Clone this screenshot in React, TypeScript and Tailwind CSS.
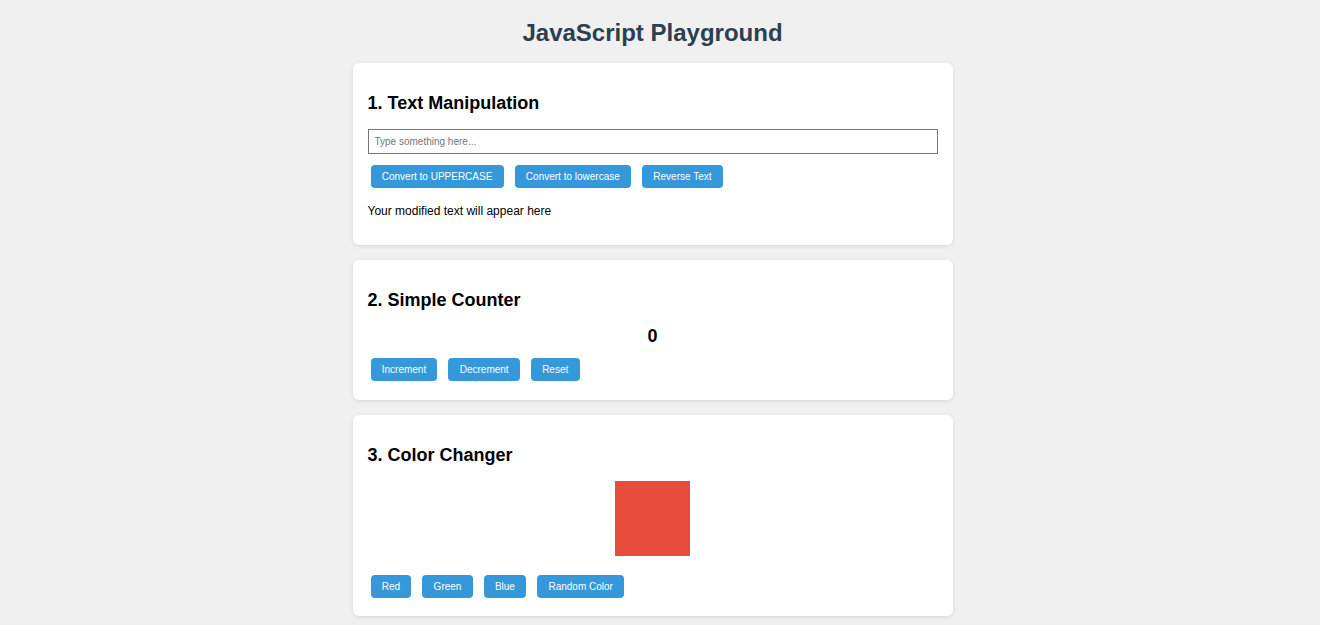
import { useState } from 'react';

const btn =
  'h-[23px] rounded-[4px] bg-[#3498db] px-[11.25px] text-[10px] leading-none text-white hover:bg-[#2980b9]';

export default function App() {
  const [text, setText] = useState('');
  const [output, setOutput] = useState('Your modified text will appear here');
  const [count, setCount] = useState(0);
  const [color, setColor] = useState('#e74c3c');

  const randomColor = () => {
    const hex = Math.floor(Math.random() * 0xffffff).toString(16).padStart(6, '0');
    setColor(`#${hex}`);
  };

  return (
    <div className="min-h-screen bg-[#f0f0f0] pt-[19px] pr-[15px] pb-[9px] font-['Liberation_Sans',Arial,sans-serif] text-black">
      <h1 className="text-center text-[24px] font-bold leading-[28px] text-[#2c3e50]">
        JavaScript Playground
      </h1>

      <div className="mx-auto mt-[16px] flex w-[600px] flex-col gap-[15px]">
        {/* text manipulation */}
        <section className="rounded-[6px] bg-white px-[15px] pt-[29px] pb-[27px] shadow-[0_1px_4px_rgba(0,0,0,0.1)]">
          <h3 className="text-[18px] font-bold leading-[22px]">1. Text Manipulation</h3>
          <input
            type="text"
            value={text}
            onChange={(e) => setText(e.target.value)}
            placeholder="Type something here..."
            className="mt-[15px] block h-[25px] w-full border border-[#767676] px-[6px] text-[10px] placeholder:text-[#757575] focus:outline-none"
          />
          <div className="mt-[11px] ml-[3px] flex gap-[11px]">
            <button className={btn} onClick={() => setOutput(text.toUpperCase())}>
              Convert to UPPERCASE
            </button>
            <button className={btn} onClick={() => setOutput(text.toLowerCase())}>
              Convert to lowercase
            </button>
            <button className={btn} onClick={() => setOutput(text.split('').reverse().join(''))}>
              Reverse Text
            </button>
          </div>
          <p className="mt-[16px] text-[12px] leading-[14px]">{output}</p>
        </section>

        {/* counter */}
        <section className="rounded-[6px] bg-white px-[15px] pt-[29px] pb-[19px] shadow-[0_1px_4px_rgba(0,0,0,0.1)]">
          <h3 className="text-[18px] font-bold leading-[22px]">2. Simple Counter</h3>
          <div className="mt-[14px] text-center text-[18px] font-bold leading-[22px]">{count}</div>
          <div className="mt-[11px] ml-[3px] flex gap-[11px]">
            <button className={btn} onClick={() => setCount(count + 1)}>
              Increment
            </button>
            <button className={btn} onClick={() => setCount(count - 1)}>
              Decrement
            </button>
            <button className={btn} onClick={() => setCount(0)}>
              Reset
            </button>
          </div>
        </section>

        {/* color changer */}
        <section className="rounded-[6px] bg-white px-[15px] pt-[29px] pb-[18px] shadow-[0_1px_4px_rgba(0,0,0,0.1)]">
          <h3 className="text-[18px] font-bold leading-[22px]">3. Color Changer</h3>
          <div className="mt-[15px] flex justify-center">
            <div className="h-[75px] w-[75px]" style={{ backgroundColor: color }} />
          </div>
          <div className="mt-[19px] ml-[3px] flex gap-[11px]">
            <button className={btn} onClick={() => setColor('#e74c3c')}>
              Red
            </button>
            <button className={btn} onClick={() => setColor('#2ecc71')}>
              Green
            </button>
            <button className={btn} onClick={() => setColor('#3498db')}>
              Blue
            </button>
            <button className={btn} onClick={randomColor}>
              Random Color
            </button>
          </div>
        </section>
      </div>
    </div>
  );
}
